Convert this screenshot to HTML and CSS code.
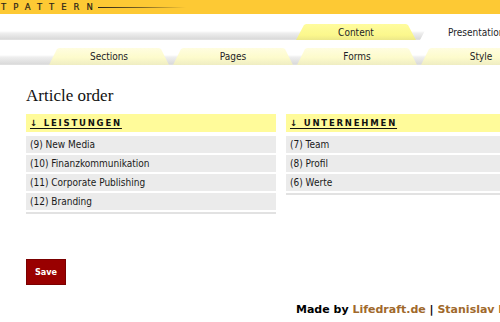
FILE: index.html
```html
<!DOCTYPE html>
<html>
<head>
<meta charset="utf-8">
<link rel="stylesheet" href="styles.css">
</head>
<body>
<div class="page">
  <header class="topbar">
    <span class="logo">TPATTERN</span>
    <span class="logo-line"></span>
  </header>
  <nav class="nav nav-main">
    <a class="tab tab-main">Content</a>
    <a class="tab tab-active">Presentation</a>
  </nav>
  <nav class="nav nav-sub">
    <a class="tab tab-sub">Sections</a>
    <a class="tab tab-sub">Pages</a>
    <a class="tab tab-sub">Forms</a>
    <a class="tab tab-sub">Style</a>
  </nav>
  <main class="content">
    <h1 class="title">Article order</h1>
    <div class="columns">
      <section class="group">
        <h2 class="group-head"><span>↓ LEISTUNGEN</span></h2>
        <ul class="items">
          <li>(9) New Media</li>
          <li>(10) Finanzkommunikation</li>
          <li>(11) Corporate Publishing</li>
          <li>(12) Branding</li>
        </ul>
      </section>
      <section class="group">
        <h2 class="group-head"><span>↓ UNTERNEHMEN</span></h2>
        <ul class="items">
          <li>(7) Team</li>
          <li>(8) Profil</li>
          <li>(6) Werte</li>
        </ul>
      </section>
    </div>
    <button class="save">Save</button>
  </main>
  <footer class="footer">Made by <a>Lifedraft.de</a> | <a>Stanislav Müller</a></footer>
</div>
</body>
</html>
```
FILE: styles.css
```css
html, body {
  margin: 0;
  padding: 0;
  overflow: hidden;
  background: #fff;
}
.page {
  width: 500px;
  height: 322px;
  overflow: hidden;
  font-family: "DejaVu Sans Condensed", "DejaVu Sans", sans-serif;
  font-stretch: condensed;
}
.topbar {
  height: 14px;
  background: #fdc934;
  display: flex;
  align-items: center;
  padding-left: 1px;
}
.logo {
  font-family: "DejaVu Sans", sans-serif;
  font-stretch: normal;
  font-size: 8.5px;
  letter-spacing: 7px;
  color: #2a2418;
  line-height: 14px;
  -webkit-text-stroke: 0.2px #2a2418;
}
.logo-line {
  display: block;
  width: 88px;
  height: 1px;
  margin-left: -2px;
  margin-top: 1px;
  background: linear-gradient(90deg, #2a2418, rgba(42,36,24,0.6) 50%, rgba(42,36,24,0));
}
.nav {
  display: flex;
  align-items: flex-end;
  gap: 4px;
  white-space: nowrap;
}
.nav-main {
  height: 26px;
  padding-left: 296px;
  background: linear-gradient(#fff 0, #fff 17px, #efefef 19px, #dadada 25px, #e6e6e6 26px);
}
.nav-sub {
  height: 25px;
  padding-left: 49px;
  background: linear-gradient(#fff 0, #fff 15px, #efefef 17px, #dadada 24px, #e6e6e6 25px);
}
.tab {
  flex: 0 0 120px;
  display: flex;
  align-items: center;
  justify-content: center;
  font-size: 10px;
  color: #1d1d28;
  clip-path: polygon(8px 1px, 10px 0, calc(100% - 10px) 0, calc(100% - 8px) 1px, 100% 100%, 0 100%);
}
.tab-main {
  height: 16px;
  background: linear-gradient(#fffc9e, #fbf78c 70%, #ece88a);
}
.tab-active {
  height: 16px;
  flex-basis: 124px;
  background: #fff;
  justify-content: flex-start;
  padding-left: 28px;
}
.tab-sub {
  height: 17px;
  background: linear-gradient(#fffde0, #fdfbcc 55%, #efedc2);
}
.content {
  padding-left: 26px;
}
.title {
  margin: 21px 0 0;
  font-family: "Liberation Serif", serif;
  font-weight: normal;
  font-size: 17px;
  line-height: 20px;
  color: #111;
}
.columns {
  display: flex;
  gap: 10px;
  margin-top: 8px;
  align-items: flex-start;
}
.group {
  flex: 0 0 250px;
}
.group-head {
  margin: 0 0 4px;
  height: 18px;
  background: #fffb9a;
  font-family: "DejaVu Sans", sans-serif;
  font-stretch: normal;
  font-size: 8.5px;
  font-weight: bold;
  letter-spacing: 1.8px;
  line-height: 18px;
  padding-left: 4px;
  color: #111;
}
.group-head span {
  text-decoration: underline;
  text-underline-offset: 2px;
}
.items {
  list-style: none;
  margin: 0;
  padding: 0 0 2px;
  border-bottom: 2px solid #e2e2e2;
}
.items li {
  height: 17px;
  line-height: 17px;
  background: #ebebeb;
  margin-bottom: 2px;
  padding-left: 4px;
  font-size: 10px;
  color: #1a1a1a;
}
.items li:last-child {
  margin-bottom: 0;
}
.save {
  display: block;
  margin-top: 45px;
  width: 40px;
  height: 26px;
  padding: 0;
  background: #990000;
  border: 1px solid #7a0000;
  color: #fff;
  font-family: "DejaVu Sans Condensed", "DejaVu Sans", sans-serif;
  font-stretch: condensed;
  font-weight: bold;
  font-size: 9px;
}
.footer {
  margin-top: 18px;
  padding-left: 296px;
  white-space: nowrap;
  font-family: "DejaVu Sans", sans-serif;
  font-stretch: normal;
  font-weight: bold;
  font-size: 11px;
  line-height: 14px;
  color: #000;
}
.footer a {
  color: #a0692c;
}
```
